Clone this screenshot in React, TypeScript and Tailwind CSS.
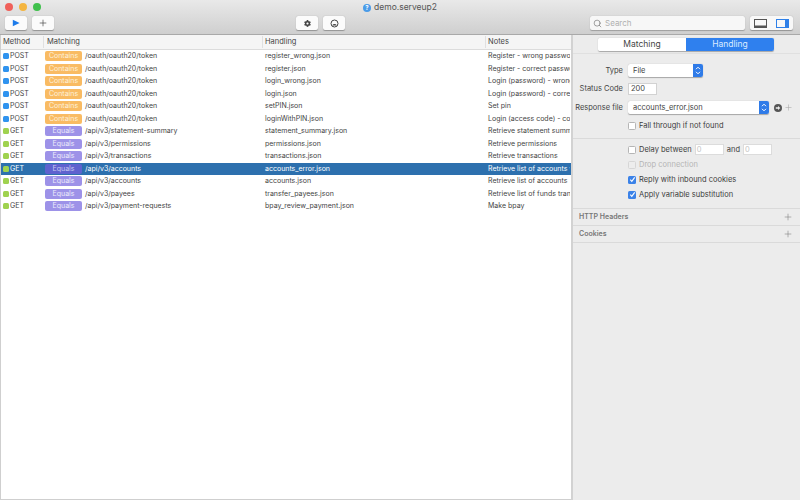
import { Search, Plus } from "lucide-react";
import { FaCog } from "react-icons/fa";

const rows = [
  { method: "POST", kind: "Contains", path: "/oauth/oauth20/token", file: "register_wrong.json", note: "Register - wrong password" },
  { method: "POST", kind: "Contains", path: "/oauth/oauth20/token", file: "register.json", note: "Register - correct password" },
  { method: "POST", kind: "Contains", path: "/oauth/oauth20/token", file: "login_wrong.json", note: "Login (password) - wrong password" },
  { method: "POST", kind: "Contains", path: "/oauth/oauth20/token", file: "login.json", note: "Login (password) - correct password" },
  { method: "POST", kind: "Contains", path: "/oauth/oauth20/token", file: "setPIN.json", note: "Set pin" },
  { method: "POST", kind: "Contains", path: "/oauth/oauth20/token", file: "loginWithPIN.json", note: "Login (access code) - correct" },
  { method: "GET", kind: "Equals", path: "/api/v3/statement-summary", file: "statement_summary.json", note: "Retrieve statement summary" },
  { method: "GET", kind: "Equals", path: "/api/v3/permissions", file: "permissions.json", note: "Retrieve permissions" },
  { method: "GET", kind: "Equals", path: "/api/v3/transactions", file: "transactions.json", note: "Retrieve transactions" },
  { method: "GET", kind: "Equals", path: "/api/v3/accounts", file: "accounts_error.json", note: "Retrieve list of accounts with error", selected: true },
  { method: "GET", kind: "Equals", path: "/api/v3/accounts", file: "accounts.json", note: "Retrieve list of accounts" },
  { method: "GET", kind: "Equals", path: "/api/v3/payees", file: "transfer_payees.json", note: "Retrieve list of funds transfer payees" },
  { method: "GET", kind: "Equals", path: "/api/v3/payment-requests", file: "bpay_review_payment.json", note: "Make bpay" },
];

const ToolButton = ({ children }: { children: React.ReactNode }) => (
  <div className="flex h-[14px] w-[22px] items-center justify-center rounded-[2px] bg-[#fbfbfb] shadow-[0_0.5px_1px_rgba(0,0,0,0.3)]">
    {children}
  </div>
);

const Stepper = () => (
  <div className="flex h-full w-[10px] items-center justify-center rounded-r-[2px] bg-[#2f7be8]">
    <svg width="6" height="9" viewBox="0 0 6 9" fill="none" stroke="white" strokeWidth="1">
      <path d="M1 3.2 L3 1.2 L5 3.2 M1 5.8 L3 7.8 L5 5.8" />
    </svg>
  </div>
);

const Check = ({ checked, disabled }: { checked?: boolean; disabled?: boolean }) => (
  <div
    className={`flex h-[8px] w-[8px] items-center justify-center rounded-[1.5px] ${
      checked ? "bg-[#3b82e8]" : disabled ? "border border-[#d6d6d6] bg-[#ededed]" : "border border-[#b5b5b5] bg-white"
    }`}
  >
    {checked && (
      <svg width="7" height="7" viewBox="0 0 7 7" fill="none" stroke="white" strokeWidth="1.1">
        <path d="M1.3 3.6 L2.8 5.3 L5.7 1.4" />
      </svg>
    )}
  </div>
);

const FieldLabel = ({ children }: { children: React.ReactNode }) => (
  <div className="w-[50px] shrink-0 text-right text-[7.5px] text-[#444]">{children}</div>
);

const CheckRow = ({ label, checked, disabled }: { label: string; checked?: boolean; disabled?: boolean }) => (
  <div className={`flex h-[15px] items-center gap-[3px] text-[7.5px] ${disabled ? "text-[#b4b4b4]" : "text-[#3c3c3c]"}`}>
    <Check checked={checked} disabled={disabled} />
    <span>{label}</span>
  </div>
);

const App = () => {
  return (
    <div className="flex h-[500px] w-[800px] flex-col overflow-hidden bg-white font-['Inter',sans-serif] text-[#444]">
      {/* toolbar */}
      <div className="h-[35px] shrink-0 border-b border-[#a9a9a9] bg-gradient-to-b from-[#e9e9e9] to-[#cfcfcf]">
        <div className="relative flex h-[15px] items-center justify-center gap-[3px] text-[8.5px] text-[#555]">
          <div className="absolute left-[5px] top-[3px] flex gap-[6px]">
            <div className="h-[8px] w-[8px] rounded-full bg-[#f0605a]" />
            <div className="h-[8px] w-[8px] rounded-full bg-[#f4b53f]" />
            <div className="h-[8px] w-[8px] rounded-full bg-[#3fc04c]" />
          </div>
          <div className="flex h-[8px] w-[8px] items-center justify-center rounded-full bg-[#4a9be8] text-[6px] font-bold text-white">?</div>
          <span>demo.serveup2</span>
        </div>
        <div className="flex items-center pl-[5px] pr-[7px] pt-px">
          <div className="flex gap-[5px]">
            <ToolButton>
              <svg width="8" height="8" viewBox="0 0 8 8"><path d="M0.8 0.8 L7.6 4 L0.8 7.2 Z" fill="#1d7bea" /></svg>
            </ToolButton>
            <ToolButton>
              <Plus size={10} strokeWidth={1.6} color="#444" />
            </ToolButton>
          </div>
          <div className="ml-[242px] flex gap-[5px]">
            <ToolButton>
              <FaCog size={7} color="#444" />
            </ToolButton>
            <ToolButton>
              <svg width="9" height="9" viewBox="0 0 9 9" fill="none">
                <circle cx="4.5" cy="4.5" r="3.5" stroke="#444" strokeWidth="1" />
                <path d="M2.2 6.4 A2.6 2.6 0 0 1 6.8 6.4 Z" fill="#444" />
              </svg>
            </ToolButton>
          </div>
          <div className="ml-[245px] flex h-[14px] w-[155px] items-center gap-[3px] rounded-[2px] bg-[#f7f7f7] pl-[3px] text-[8px] text-[#b0b0b0] shadow-[0_0.5px_1px_rgba(0,0,0,0.25)]">
            <Search size={9} color="#666" strokeWidth={1.6} />
            <span>Search</span>
          </div>
          <div className="ml-[5px] flex h-[14px] w-[43px] items-center justify-around rounded-[2px] bg-[#f8f8f8] shadow-[0_0.5px_1px_rgba(0,0,0,0.3)]">
            <svg width="13" height="9" viewBox="0 0 13 9" fill="none">
              <rect x="0.5" y="0.5" width="12" height="8" stroke="#555" />
              <rect x="0.5" y="6.5" width="12" height="2" fill="#555" />
            </svg>
            <svg width="13" height="9" viewBox="0 0 13 9" fill="none">
              <rect x="0.5" y="0.5" width="12" height="8" stroke="#2f80e8" />
              <rect x="9" y="0.5" width="3.5" height="8" fill="#2f80e8" />
            </svg>
          </div>
        </div>
      </div>

      <div className="flex min-h-0 flex-1">
        {/* request table */}
        <div className="w-[571px] shrink-0 overflow-hidden border-b border-l border-[#cfcfcf] text-[7px]">
          <div className="grid h-[15px] grid-cols-[42px_219px_223px_85px] items-center border-b border-[#dcdcdc] bg-[#f5f5f5] text-[7.5px] text-[#444]">
            <div className="pl-[2px]">Method</div>
            <div className="border-l border-[#e0e0e0] pl-[3px]">Matching</div>
            <div className="border-l border-[#e0e0e0] pl-[2px]">Handling</div>
            <div className="border-l border-[#e0e0e0] pl-[2px]">Notes</div>
          </div>
          {rows.map((row, i) => (
            <div
              key={i}
              className={`grid h-[12.5px] grid-cols-[42px_219px_223px_85px] items-center ${
                row.selected ? "bg-[#2d70ae] text-white" : "text-[#444]"
              }`}
            >
              <div className="flex items-center gap-[1px] pl-[2px]">
                <div className={`h-[6px] w-[6px] rounded-[1.5px] ${row.method === "POST" ? "bg-[#2f93ef]" : "bg-[#9fd24f]"}`} />
                <span>{row.method}</span>
              </div>
              <div className="flex items-center gap-[3px] pl-[2px]">
                <div
                  className={`flex h-[10px] w-[37px] items-center justify-center rounded-[2px] text-[7px] ${
                    row.kind === "Contains"
                      ? "bg-[#f9bb63] text-[#fdf1dc]"
                      : row.selected
                        ? "bg-[#5f62cf] text-[#c9c9f0]"
                        : "bg-[#9d92e8] text-[#ecebfb]"
                  }`}
                >
                  {row.kind}
                </div>
                <span>{row.path}</span>
              </div>
              <div className="pl-[3px]">{row.file}</div>
              <div className="overflow-hidden whitespace-nowrap pl-[3px]">{row.note}</div>
            </div>
          ))}
        </div>

        {/* handling panel */}
        <div className="min-w-0 flex-1 border-l-2 border-[#d2d2d2] bg-[#ececec]">
          <div className="flex h-[19px] items-center justify-center border-b border-[#e0e0e0] pr-px">
            <div className="flex h-[13px] w-[176px] overflow-hidden rounded-[2px] text-[8.5px] shadow-[0_0.5px_1px_rgba(0,0,0,0.3)]">
              <div className="flex flex-1 items-center justify-center bg-white text-[#444]">Matching</div>
              <div className="flex flex-1 items-center justify-center bg-[#2f80ee] text-[#dcebff]">Handling</div>
            </div>
          </div>

          <div className="flex flex-col border-b border-[#dadada] pb-[7px] pt-[10px]">
            <div className="flex h-[13px] items-center gap-[5px]">
              <FieldLabel>Type</FieldLabel>
              <div className="flex h-[13px] w-[75px] items-center justify-between rounded-[2px] bg-white pl-[5px] text-[7.5px] shadow-[0_0.5px_1px_rgba(0,0,0,0.3)]">
                <span>File</span>
                <Stepper />
              </div>
            </div>
            <div className="mt-[6px] flex h-[12px] items-center gap-[5px]">
              <FieldLabel>Status Code</FieldLabel>
              <div className="flex h-[12px] w-[29px] items-center border border-[#d2d2d2] bg-white pl-[2px] text-[7.5px]">200</div>
            </div>
            <div className="mt-[6px] flex h-[13px] items-center gap-[5px]">
              <FieldLabel>Response file</FieldLabel>
              <div className="flex h-[13px] w-[141px] items-center justify-between rounded-[2px] bg-white pl-[5px] text-[7.5px] shadow-[0_0.5px_1px_rgba(0,0,0,0.3)]">
                <span>accounts_error.json</span>
                <Stepper />
              </div>
              <div className="flex items-center gap-[2px]">
                <svg width="8" height="8" viewBox="0 0 8 8">
                  <circle cx="4" cy="4" r="4" fill="#555" />
                  <path d="M1.8 3.3 H4 V2 L6.3 4 L4 6 V4.7 H1.8 Z" fill="#eee" />
                </svg>
                <Plus size={9} strokeWidth={1.5} color="#a8a8a8" />
              </div>
            </div>
            <div className="mt-[6px] pl-[55px]">
              <div className="flex h-[11px] items-center gap-[3px] text-[7.5px] text-[#3c3c3c]">
                <Check />
                <span>Fall through if not found</span>
              </div>
            </div>
          </div>

          <div className="border-b border-[#dadada] pb-[6px] pl-[55px] pt-[3px]">
            <div className="flex h-[15px] items-center gap-[3px] text-[7.5px] text-[#3c3c3c]">
              <Check />
              <span>Delay between</span>
              <div className="flex h-[11px] w-[29px] items-center border border-[#dcdcdc] bg-white pl-[1px] text-[#c4c4c4]">0</div>
              <span>and</span>
              <div className="flex h-[11px] w-[29px] items-center border border-[#dcdcdc] bg-white pl-[1px] text-[#c4c4c4]">0</div>
            </div>
            <CheckRow label="Drop connection" disabled />
            <CheckRow label="Reply with inbound cookies" checked />
            <CheckRow label="Apply variable substitution" checked />
          </div>

          {["HTTP Headers", "Cookies"].map((title) => (
            <div key={title} className="flex h-[17px] items-center justify-between border-b border-[#dadada] pl-[6px] pr-[7px] text-[7px] font-semibold text-[#777]">
              <span>{title}</span>
              <Plus size={10} strokeWidth={1.3} color="#777" />
            </div>
          ))}
        </div>
      </div>
    </div>
  );
};

export default App;
